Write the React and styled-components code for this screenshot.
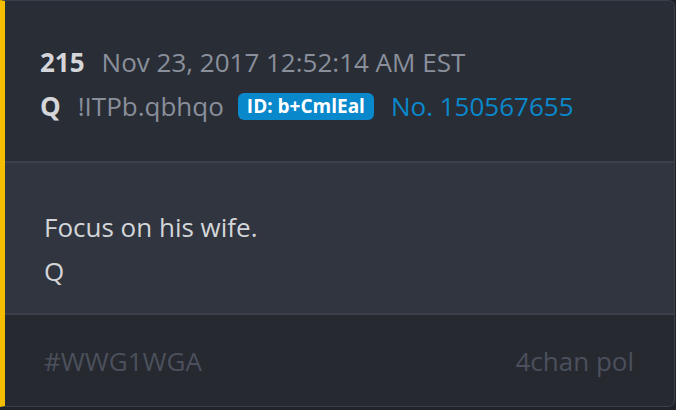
import React from "react";
import styled, { createGlobalStyle } from "styled-components";

const Global = createGlobalStyle`
  html, body { margin: 0; padding: 0; background: #1f2228; }
  body { font-family: "Open Sans", "Noto Sans", sans-serif; }
  #root { width: 676px; height: 410px; }
`;

const Card = styled.article`
  box-sizing: border-box;
  width: 675px;
  height: 407px;
  display: flex;
  flex-direction: column;
  border: 1px solid #3b404b;
  border-left: 5px solid #f5bd02;
  border-radius: 0 7px 7px 0;
  overflow: hidden;
  background: #292d35;
`;

const Header = styled.header`
  box-sizing: border-box;
  height: 162px;
  padding: 41px 0 0 35px;
  display: flex;
  flex-direction: column;
  gap: 4px;
  background: #292d35;
  border-bottom: 2px solid #3b404b;
`;

const Row = styled.div`
  display: flex;
  align-items: center;
  gap: 17px;
  font-size: 26px;
  line-height: 40px;
  white-space: nowrap;
`;

const Strong = styled.span`
  font-weight: 700;
  color: #d4d6da;
`;

const Muted = styled.span`
  color: #8a8f9c;
`;

const Badge = styled.span`
  display: inline-flex;
  align-items: center;
  height: 27px;
  padding: 0 9px;
  border-radius: 6px;
  background: #0a88cc;
  color: #ffffff;
  font-size: 19px;
  font-weight: 700;
  margin-left: -3px;
`;

const Link = styled.span`
  color: #0a88cc;
`;

const Body = styled.section`
  box-sizing: border-box;
  height: 152px;
  padding: 42px 0 0 39px;
  background: #30353f;
  border-bottom: 2px solid #3b404b;
  color: #d3d5d9;
  font-size: 26px;
  line-height: 44px;
`;

const Line = styled.div``;

const Footer = styled.footer`
  flex: 1;
  display: flex;
  align-items: center;
  justify-content: space-between;
  padding: 0 40px 0 39px;
  background: #262930;
  color: #4b505c;
  font-size: 26px;
`;

export default function App() {
  return (
    <>
      <Global />
      <Card>
        <Header>
          <Row>
            <Strong>215</Strong>
            <Muted>Nov 23, 2017 12:52:14 AM EST</Muted>
          </Row>
          <Row>
            <Strong>Q</Strong>
            <Muted>!ITPb.qbhqo</Muted>
            <Badge>ID: b+CmlEal</Badge>
            <Link>No. 150567655</Link>
          </Row>
        </Header>
        <Body>
          <Line>Focus on his wife.</Line>
          <Line>Q</Line>
        </Body>
        <Footer>
          <span>#WWG1WGA</span>
          <span>4chan pol</span>
        </Footer>
      </Card>
    </>
  );
}
